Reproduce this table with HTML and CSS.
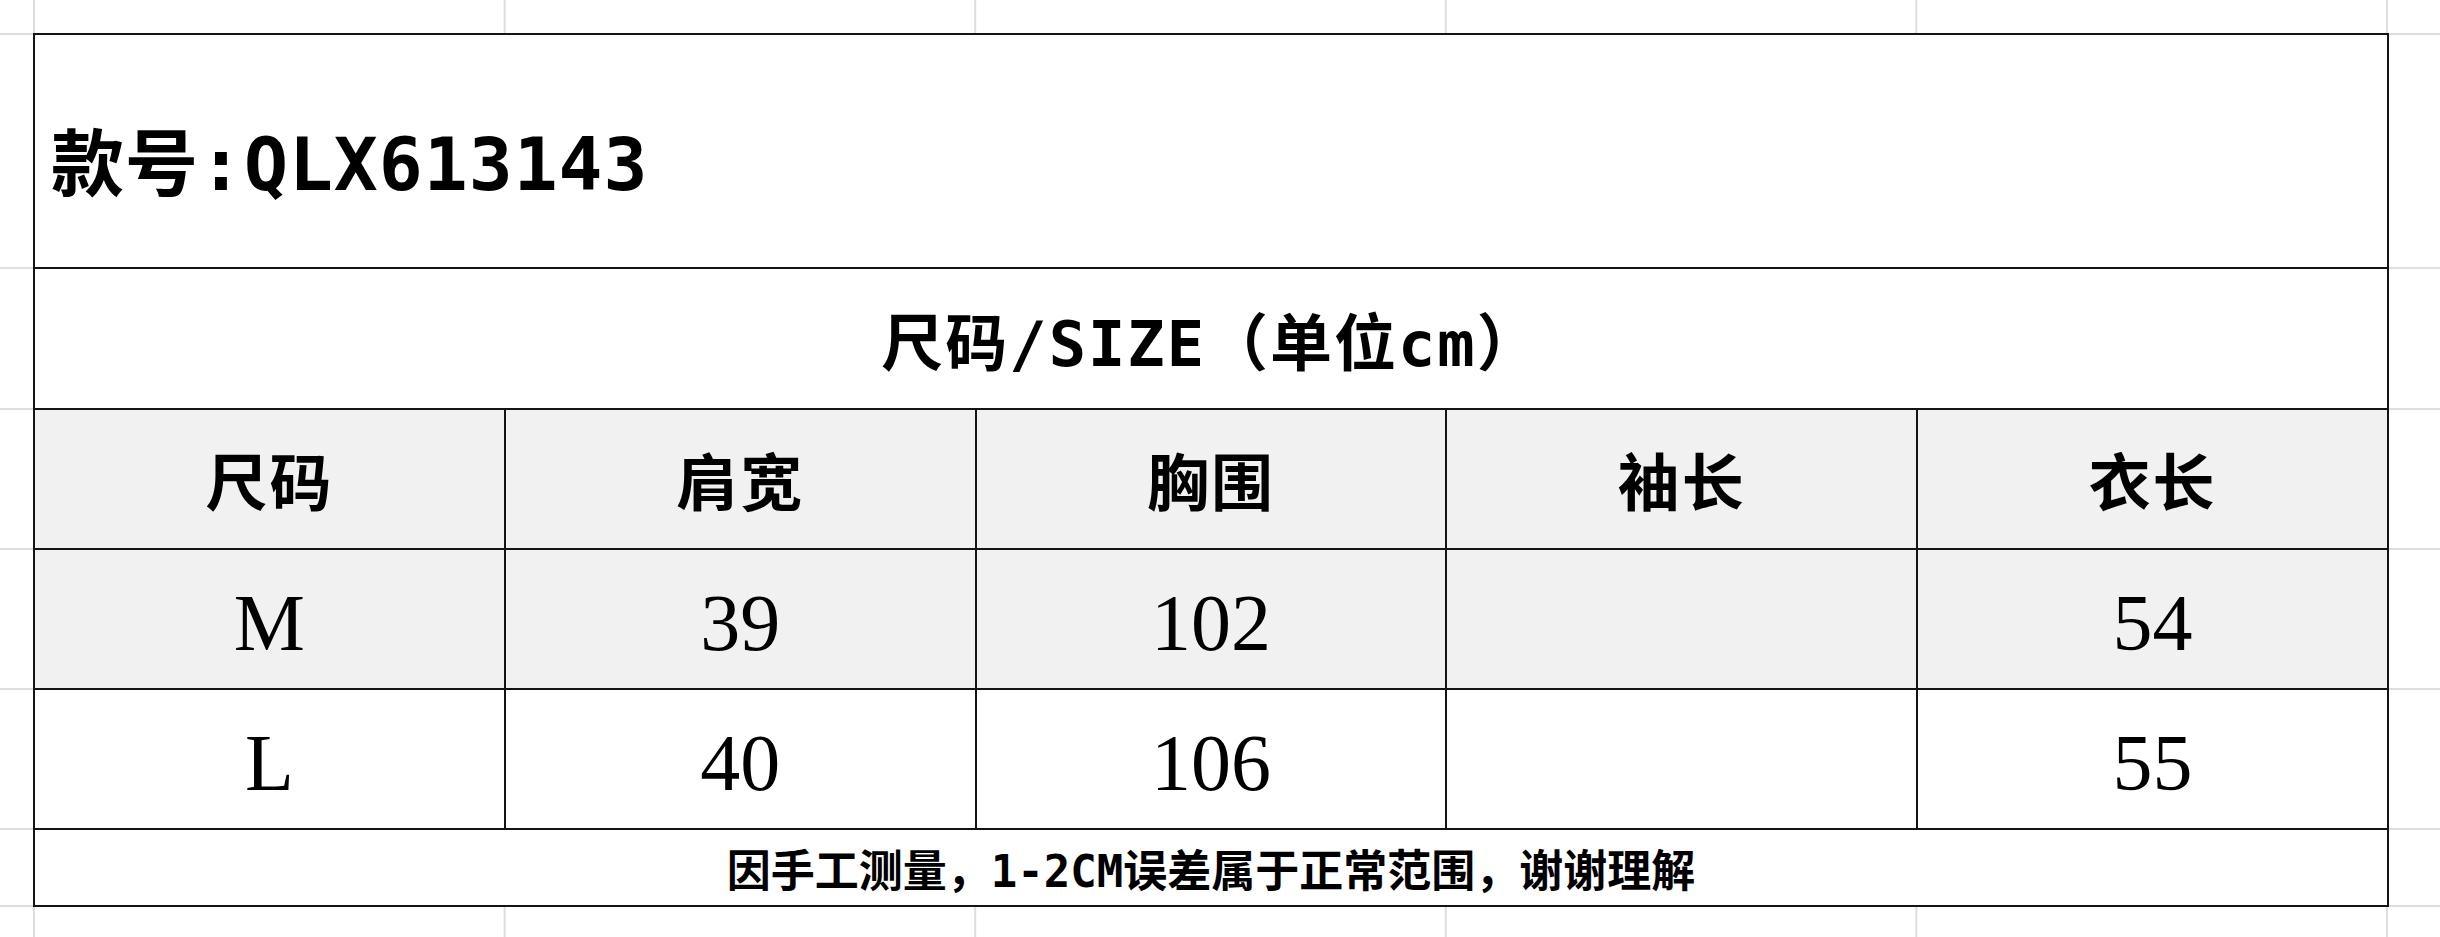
FILE: index.html
```html
<!DOCTYPE html>
<html lang="zh-CN">
<head>
<meta charset="utf-8">
<title>尺码表 QLX613143</title>
<link rel="stylesheet" href="styles.css">
</head>
<body>
<div class="sheet">
  <table class="size-table">
    <colgroup>
      <col class="col"><col class="col"><col class="col"><col class="col"><col class="col">
    </colgroup>
    <tbody>
      <tr class="row-title">
        <td colspan="5" class="title">款号:QLX613143</td>
      </tr>
      <tr class="row-sub">
        <td colspan="5" class="subtitle">尺码/SIZE（单位cm）</td>
      </tr>
      <tr class="row-head shaded">
        <td class="head">尺码</td>
        <td class="head">肩宽</td>
        <td class="head">胸围</td>
        <td class="head">袖长</td>
        <td class="head">衣长</td>
      </tr>
      <tr class="row-data shaded">
        <td class="val">M</td>
        <td class="val">39</td>
        <td class="val">102</td>
        <td class="val"></td>
        <td class="val">54</td>
      </tr>
      <tr class="row-data">
        <td class="val">L</td>
        <td class="val">40</td>
        <td class="val">106</td>
        <td class="val"></td>
        <td class="val">55</td>
      </tr>
      <tr class="row-note">
        <td colspan="5" class="note">因手工测量，1-2CM误差属于正常范围，谢谢理解</td>
      </tr>
    </tbody>
  </table>
</div>
</body>
</html>
```

FILE: styles.css
```css
html, body {
  margin: 0;
  padding: 0;
  background: #ffffff;
}

.sheet {
  width: 2440px;
  height: 937px;
  box-sizing: border-box;
  padding: 33px 0 0 33px;
  overflow: hidden;
  background-color: #ffffff;
  background-image:
    linear-gradient(90deg, #dedede 2px, transparent 2px),
    linear-gradient(#dedede, #dedede),
    linear-gradient(#dedede, #dedede),
    linear-gradient(#dedede, #dedede),
    linear-gradient(#dedede, #dedede),
    linear-gradient(#dedede, #dedede),
    linear-gradient(#dedede, #dedede),
    linear-gradient(#dedede, #dedede);
  background-repeat: repeat-x, no-repeat, no-repeat, no-repeat, no-repeat, no-repeat, no-repeat, no-repeat;
  background-size:
    470.6px 100%,
    100% 2px, 100% 2px, 100% 2px, 100% 2px, 100% 2px, 100% 2px, 100% 2px;
  background-position:
    33px 0,
    0 33px, 0 267px, 0 408px, 0 548px, 0 688px, 0 828px, 0 905px;
}

.size-table {
  width: 2356px;
  table-layout: fixed;
  border-collapse: collapse;
  background: #ffffff;
  color: #000000;
}

.size-table td {
  border: 2px solid #141414;
  padding: 0;
  text-align: center;
  vertical-align: middle;
}

.shaded td {
  background: #f1f1f1;
}

.row-title td { height: 218px; }
.row-sub td { height: 139px; }
.row-head td { height: 138px; }
.row-data td { height: 130px; }
.row-note td { height: 75px; }

.title {
  text-align: left !important;
  padding-left: 16px !important;
  padding-top: 14px !important;
  font-family: "DejaVu Sans Mono", "Noto Sans CJK SC", monospace;
  font-size: 73px;
  font-weight: 700;
  letter-spacing: 1px;
}

.subtitle {
  font-family: "DejaVu Sans Mono", "Noto Sans CJK SC", monospace;
  font-size: 62px;
  font-weight: 700;
  letter-spacing: 2px;
}

.head {
  font-family: "Noto Sans CJK SC", sans-serif;
  font-size: 62px;
  font-weight: 700;
  letter-spacing: 2px;
}

.size-table td.val {
  padding-top: 8px;
  font-family: "Liberation Serif", "Noto Serif CJK SC", serif;
  font-size: 80px;
  font-weight: 400;
}

.note {
  font-family: "DejaVu Sans Mono", "Noto Sans CJK SC", monospace;
  font-size: 44px;
  font-weight: 700;
}
```
